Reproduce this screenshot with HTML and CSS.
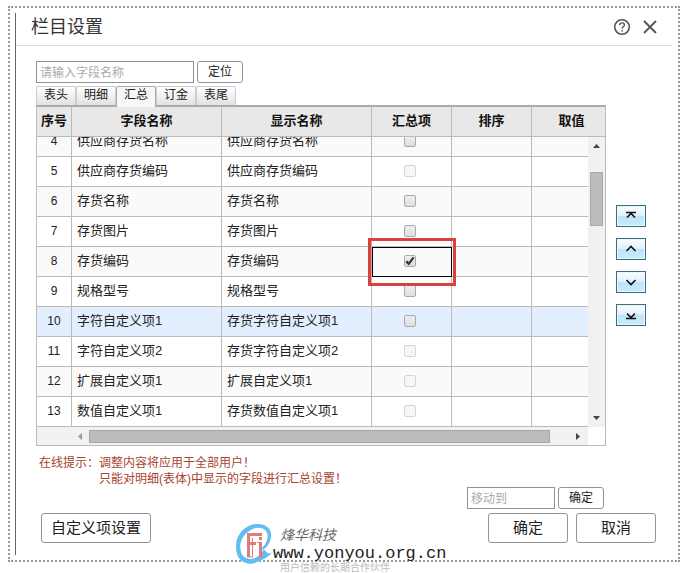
FILE: index.html
```
<!DOCTYPE html>
<html lang="zh-CN">
<head>
    <meta charset="UTF-8">
    <meta name="viewport" content="width=device-width, initial-scale=1.0">
    <title>栏目设置</title>
    <link rel="stylesheet" href="styles.css">
</head>
<body>

<div class="page">
    <div class="dialog">
        <header class="dialog-header">
            <h1>栏目设置</h1>
            <button type="button" class="icon-btn" aria-label="帮助">
                <svg width="18" height="18" viewBox="0 0 18 18" fill="none" stroke="#555" stroke-width="1.6">
                    <circle cx="9" cy="9" r="7.3"/>
                    <path stroke-width="1.4" d="M6.6 7.2C6.6 5.7 7.6 4.9 9 4.9s2.4.8 2.4 2.1c0 1.7-2.3 1.8-2.3 3.7M9.1 11.9v1.5"/>
                </svg>
            </button>
            <button type="button" class="icon-btn" aria-label="关闭">
                <svg width="18" height="18" viewBox="0 0 18 18" fill="none" stroke="#555" stroke-width="1.8">
                    <path d="M3 3l12 12M15 3L3 15"/>
                </svg>
            </button>
        </header>

        <form class="dialog-body">
            <div class="toolbar">
                <input type="text" class="search" placeholder="请输入字段名称" aria-label="请输入字段名称">
                <button type="button" class="btn btn-small">定位</button>
            </div>

            <div class="tabs">
                <button type="button" class="tab">表头</button>
                <button type="button" class="tab">明细</button>
                <button type="button" class="tab active">汇总</button>
                <button type="button" class="tab">订金</button>
                <button type="button" class="tab">表尾</button>
            </div>

            <div class="main">
                <div class="grid">
                    <div class="grid-head">
                        <table>
                            <colgroup><col class="c-no"><col class="c-name"><col class="c-name"><col class="c-opt"><col class="c-opt"><col class="c-opt"></colgroup>
                            <thead>
                                <tr><th>序号</th><th>字段名称</th><th>显示名称</th><th>汇总项</th><th>排序</th><th>取值</th></tr>
                            </thead>
                        </table>
                    </div>
                    <div class="grid-body">
                        <div class="grid-rows">
                            <table>
                                <colgroup><col class="c-no"><col class="c-name"><col class="c-name"><col class="c-opt"><col class="c-opt"><col class="c-opt"></colgroup>
                                <tbody>
                                    <tr><td>4</td><td>供应商存货名称</td><td>供应商存货名称</td><td><input type="checkbox" aria-label="汇总项 4"></td><td></td><td></td></tr>
                                    <tr><td>5</td><td>供应商存货编码</td><td>供应商存货编码</td><td><input type="checkbox" aria-label="汇总项 5" disabled></td><td></td><td></td></tr>
                                    <tr><td>6</td><td>存货名称</td><td>存货名称</td><td><input type="checkbox" aria-label="汇总项 6"></td><td></td><td></td></tr>
                                    <tr><td>7</td><td>存货图片</td><td>存货图片</td><td><input type="checkbox" aria-label="汇总项 7"></td><td></td><td></td></tr>
                                    <tr><td>8</td><td>存货编码</td><td>存货编码</td><td class="current"><label class="check"><input type="checkbox" aria-label="汇总项 8" checked><svg class="tick" width="12" height="12" viewBox="0 0 12 12" fill="none" stroke="#333" stroke-width="2.2"><path d="M2.2 6.4l2.5 2.5L9.6 2.4"/></svg></label><span class="mark"></span></td><td></td><td></td></tr>
                                    <tr><td>9</td><td>规格型号</td><td>规格型号</td><td><input type="checkbox" aria-label="汇总项 9"></td><td></td><td></td></tr>
                                    <tr class="selected"><td>10</td><td>字符自定义项1</td><td>存货字符自定义项1</td><td><input type="checkbox" aria-label="汇总项 10"></td><td></td><td></td></tr>
                                    <tr><td>11</td><td>字符自定义项2</td><td>存货字符自定义项2</td><td><input type="checkbox" aria-label="汇总项 11" disabled></td><td></td><td></td></tr>
                                    <tr><td>12</td><td>扩展自定义项1</td><td>扩展自定义项1</td><td><input type="checkbox" aria-label="汇总项 12" disabled></td><td></td><td></td></tr>
                                    <tr><td>13</td><td>数值自定义项1</td><td>存货数值自定义项1</td><td><input type="checkbox" aria-label="汇总项 13" disabled></td><td></td><td></td></tr>
                                </tbody>
                            </table>
                        </div>
                        <div class="vscroll">
                            <svg width="7" height="4" viewBox="0 0 7 4"><path fill="#444" d="M0 4L3.5 0 7 4z"/></svg>
                            <span class="vthumb"></span>
                            <svg width="7" height="4" viewBox="0 0 7 4"><path fill="#444" d="M0 0h7L3.5 4z"/></svg>
                        </div>
                    </div>
                    <div class="hscroll">
                        <svg width="4" height="7" viewBox="0 0 4 7"><path fill="#999" d="M4 0v7L0 3.5z"/></svg>
                        <span class="hthumb"></span>
                        <svg width="4" height="7" viewBox="0 0 4 7"><path fill="#444" d="M0 0l4 3.5L0 7z"/></svg>
                    </div>
                </div>

                <div class="movers">
                    <button type="button" aria-label="置顶"><svg width="12" height="10" viewBox="0 0 12 10"><path d="M1 1.5h10M2 6.5L6 2.5l4 4"/></svg></button>
                    <button type="button" aria-label="上移"><svg width="12" height="10" viewBox="0 0 12 10"><path d="M1.5 7L6 2.5 10.5 7"/></svg></button>
                    <button type="button" aria-label="下移"><svg width="12" height="10" viewBox="0 0 12 10"><path d="M1.5 3L6 7.5 10.5 3"/></svg></button>
                    <button type="button" aria-label="置底"><svg width="12" height="10" viewBox="0 0 12 10"><path d="M1 8.5h10M2 3.5l4 4 4-4"/></svg></button>
                </div>
            </div>

            <div class="hint">
                <span>在线提示：</span>
                <p>调整内容将应用于全部用户！<br>只能对明细(表体)中显示的字段进行汇总设置！</p>
            </div>

            <div class="move-to">
                <input type="text" placeholder="移动到" aria-label="移动到">
                <button type="button" class="btn btn-small">确定</button>
            </div>

            <div class="footer">
                <button type="button" class="btn btn-wide">自定义项设置</button>
                <button type="submit" class="btn">确定</button>
                <button type="button" class="btn">取消</button>
            </div>
        </form>
    </div>

    <div class="watermark">
        <svg width="38" height="44" viewBox="0 0 38 44">
            <path fill="#62bdf0" d="M28 27C35 22 38 13 35 7 31 0 20-1 12 4 3 9-1 20 2 31c3 9 12 12 20 8 6-2 11-5 15-9-3 1-6 0-7-3zM27 25C33 19 34 12 31 8 27 3 19 4 13 9 6 14 4 22 6 29c2 7 9 8 14 6 4-2 6-4 8-7z" fill-rule="evenodd"/>
            <path fill="none" stroke="#e27c7c" stroke-width="3" d="M13.5 34V11.5H27M13.5 20.5H21M25.5 34V19M25.5 14v3"/>
            <path fill="none" stroke="#e27c7c" d="M17.5 15v19M12 34h6M23 34h5M22 19.500h3"/>
        </svg>
        <div class="watermark-text">
            <span class="brand">烽华科技</span>
            <span class="site">www.yonyou.org.cn</span>
            <span class="slogan">用户信赖的长期合作伙伴</span>
        </div>
    </div>
</div>

</body>
</html>
```

FILE: styles.css
```
* {
    box-sizing: border-box;
}

body {
    margin: 0;
    background-color: #fff;
    color: #222;
    font-family: "Liberation Sans", "Noto Sans CJK SC", sans-serif;
    font-size: 12px;
}

button,
input {
    font-family: inherit;
    font-size: 12px;
    margin: 0;
}

.page {
    position: relative;
    margin: 6px 11px 11px 8px;
    border: 2px dotted #999;
    padding: 5px 6px 5px 5px;
}

.dialog {
    border-left: 1px solid #667;
}

.dialog-header {
    display: flex;
    align-items: center;
    gap: 10px;
    height: 33px;
    padding: 0 13px 4px 15px;
    border-bottom: 1px solid #ddd;
}

.dialog-header h1 {
    flex: 1;
    margin: 0;
    font-size: 18px;
    font-weight: normal;
    line-height: 28px;
    color: #333;
}

.icon-btn {
    display: flex;
    padding: 0;
    border: none;
    background: none;
    cursor: pointer;
}

.dialog-body {
    padding: 15px 16px 12px 20px;
}

.toolbar,
.move-to {
    display: flex;
    gap: 3px;
}

input[type="text"] {
    height: 22px;
    padding: 2px 3px 0;
    border: 1px solid #8d9499;
    background-color: #fff;
}

input::placeholder {
    color: #aaa;
}

.search {
    width: 158px;
}

.btn {
    width: 80px;
    height: 30px;
    padding: 0;
    border: 1px solid #8796a0;
    border-radius: 3px;
    background-color: #fff;
    color: #222;
    font-size: 15px;
    line-height: 20px;
    cursor: pointer;
}

.btn-small {
    width: 46px;
    height: 22px;
    font-size: 12px;
}

.btn-wide {
    width: 110px;
    margin-right: auto;
}

.tabs {
    display: flex;
    margin-top: 3px;
}

.tab {
    width: 40px;
    height: 19px;
    padding: 0 0 2px;
    border: 1px solid #ccc;
    border-bottom: none;
    border-radius: 2px 2px 0 0;
    background: linear-gradient(#fff, #e2e2e2);
    color: #222;
    line-height: 16px;
    cursor: pointer;
}

.tab.active {
    position: relative;
    z-index: 1;
    height: 21px;
    margin-bottom: -2px;
    padding-bottom: 4px;
    border-color: #aaa;
    background: #f7f7f7;
}

.main {
    display: flex;
    gap: 10px;
    margin-right: 10px;
}

.grid {
    flex: 1;
    min-width: 0;
    border: 1px solid #bbb;
    border-top: 2px solid #aaa;
}

.grid table {
    width: 575px;
    min-width: 100%;
    table-layout: fixed;
    border-spacing: 0;
    font-size: 13px;
}

.c-no {
    width: 35px;
}

.c-name {
    width: 150px;
}

.c-opt {
    width: 80px;
}

.grid-head {
    overflow: hidden;
    background-color: #e8e8e8;
}

th,
td {
    height: 30px;
    padding: 0 5px;
    border-right: 1px solid #bbb;
    border-bottom: 1px solid #bbb;
    line-height: 18px;
}

th {
    padding: 0 0 2px;
    color: #111;
    font-weight: bold;
}

td {
    padding-bottom: 2px;
    white-space: nowrap;
}

td:first-child {
    padding: 0 0 2px;
    text-align: center;
    font-size: 12px;
}

td:nth-child(4) {
    padding: 0 3px 2px 0;
    text-align: center;
}

tbody tr:nth-child(odd) {
    background-color: #fafafa;
}

tbody tr.selected {
    background-color: #e3efff;
}

.grid-body {
    display: flex;
    height: 290px;
}

/* list is scrolled, the first row is partly under the header */
.grid-rows {
    display: flex;
    flex: 1;
    align-items: flex-end;
    min-width: 0;
    overflow: hidden;
}

.grid-rows table {
    flex: none;
}

input[type="checkbox"] {
    display: block;
    width: 12px;
    height: 12px;
    margin: 0 auto;
    appearance: none;
    border: 1px solid #aaa;
    border-radius: 2px;
    background: linear-gradient(#eee, #dedede);
}

input[type="checkbox"]:disabled {
    border-color: #d5d5d5;
    background: #f6f6f6;
}

.check {
    display: block;
    position: relative;
    width: 12px;
    margin: 0 auto;
}

.current {
    position: relative;
}

.current::before {
    content: "";
    position: absolute;
    inset: 0 -1px -1px 0;
    border: 1px solid #000;
}

.tick {
    position: absolute;
    inset: 0;
    pointer-events: none;
}

.mark {
    position: absolute;
    inset: -9px -5px -10px -4px;
    border: 3px solid #d9403f;
    pointer-events: none;
}

.vscroll {
    display: flex;
    flex-direction: column;
    align-items: center;
    width: 17px;
    padding: 7px 0;
    background-color: #f1f1f1;
}

.vthumb {
    width: 13px;
    height: 54px;
    margin: 24px 0 auto;
    border: 1px solid #a8a8a8;
    background-color: #bcbcbc;
}

.hscroll {
    display: flex;
    align-items: center;
    gap: 7px;
    height: 18px;
    margin-right: 17px;
    padding: 0 8px 0 41px;
    background-color: #f1f1f1;
}

.hthumb {
    flex: 1;
    height: 13px;
    margin-right: 19px;
    border: 1px solid #a8a8a8;
    background-color: #bcbcbc;
}

.movers {
    display: flex;
    flex-direction: column;
    gap: 11px;
    padding-top: 100px;
}

.movers button {
    display: flex;
    align-items: center;
    justify-content: center;
    width: 30px;
    height: 22px;
    padding: 0;
    border: 1px solid #3c7078;
    background: linear-gradient(#fafdff 0%, #dff1fc 50%, #bde4f8 51%, #c8ecfb 100%);
    box-shadow: inset 0 0 0 1px #e6f8ff;
    cursor: pointer;
}

.movers path {
    fill: none;
    stroke: #111;
    stroke-width: 1.6;
}

.hint {
    display: flex;
    margin-top: 9px;
    padding-left: 3px;
    color: #a8432f;
    line-height: 16px;
}

.hint p {
    margin: 0;
}

.move-to {
    justify-content: flex-end;
    margin-right: 52px;
}

.move-to input {
    width: 88px;
}

.footer {
    display: flex;
    gap: 8px;
    margin-top: 4px;
    padding-left: 5px;
}

.watermark {
    position: absolute;
    left: 225px;
    bottom: -9px;
    display: flex;
    height: 46px;
    pointer-events: none;
}

.watermark-text {
    display: flex;
    flex-direction: column;
    color: #666;
}

.brand {
    padding-left: 7px;
    font-size: 14px;
    font-style: italic;
    line-height: 20px;
    margin-top: 2px;
}

.site {
    font-family: "Liberation Mono", monospace;
    font-size: 17px;
    line-height: 18px;
    color: #222;
}

.slogan {
    padding-left: 7px;
    font-size: 10px;
    line-height: 10px;
    color: #bbb;
}
```
